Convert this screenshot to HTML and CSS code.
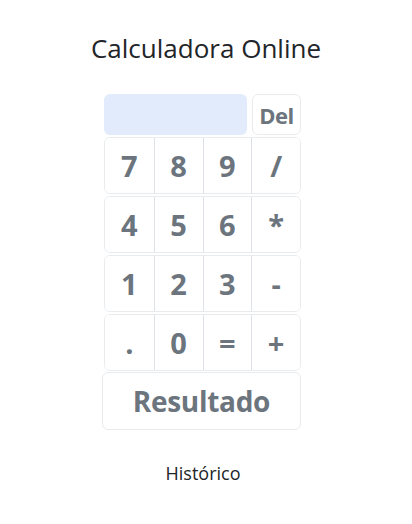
FILE: index.html
```html
<!DOCTYPE html>
<html lang="pt">
<head>
<meta charset="utf-8">
<title>Calculadora Online</title>
<link rel="stylesheet" href="styles.css">
</head>
<body>
<h1 class="title">Calculadora Online</h1>
<div class="calc">
  <div class="top">
    <input class="display" type="text" value="">
    <button class="btn del">Del</button>
  </div>
  <div class="row"><button class="key">7</button><button class="key">8</button><button class="key">9</button><button class="key">/</button></div>
  <div class="row"><button class="key">4</button><button class="key">5</button><button class="key">6</button><button class="key">*</button></div>
  <div class="row"><button class="key">1</button><button class="key">2</button><button class="key">3</button><button class="key">-</button></div>
  <div class="row"><button class="key">.</button><button class="key">0</button><button class="key">=</button><button class="key">+</button></div>
  <button class="btn result">Resultado</button>
</div>
<p class="history">Histórico</p>
</body>
</html>
```
FILE: styles.css
```css
html, body {
  margin: 0;
  padding: 0;
  background: #ffffff;
}
body {
  font-family: "Open Sans", "Noto Sans", sans-serif;
  color: #212529;
}
.title {
  margin: 30px 0 0 0;
  font-size: 26px;
  font-weight: 400;
  line-height: 36px;
  text-align: center;
}
.calc {
  width: 197px;
  margin: 28px 0 0 104px;
  display: flex;
  flex-direction: column;
  gap: 2px;
}
.top {
  display: flex;
  gap: 5px;
}
.display {
  width: 143px;
  height: 41px;
  box-sizing: border-box;
  border: none;
  border-radius: 6px;
  background: #e1ebfc;
  padding: 0;
  margin: 0;
}
.btn, .key {
  font-family: "Open Sans", "Noto Sans", sans-serif;
  font-weight: 700;
  color: #6c757d;
  background: #ffffff;
  padding: 0;
  margin: 0;
}
.del {
  width: 49px;
  height: 41px;
  box-sizing: border-box;
  border: 1px solid #e9ecef;
  border-radius: 6px;
  font-size: 22px;
  letter-spacing: -0.5px;
}
.row {
  display: grid;
  grid-template-columns: repeat(4, 1fr);
  height: 57px;
  box-sizing: border-box;
  border: 1px solid #e9ecef;
  border-radius: 6px;
  overflow: hidden;
}
.key {
  border: none;
  border-left: 1px solid #dee2e6;
  font-size: 29px;
  line-height: 1;
}
.key:first-child {
  border-left: none;
}
.result {
  width: 199px;
  height: 58px;
  margin-left: -2px;
  margin-top: -1px;
  box-sizing: border-box;
  border: 1px solid #e9ecef;
  border-radius: 6px;
  font-size: 28px;
  letter-spacing: -0.3px;
}
.history {
  margin: 31px 0 0 0;
  text-align: center;
  font-size: 18px;
  padding-right: 6px;
}
```
